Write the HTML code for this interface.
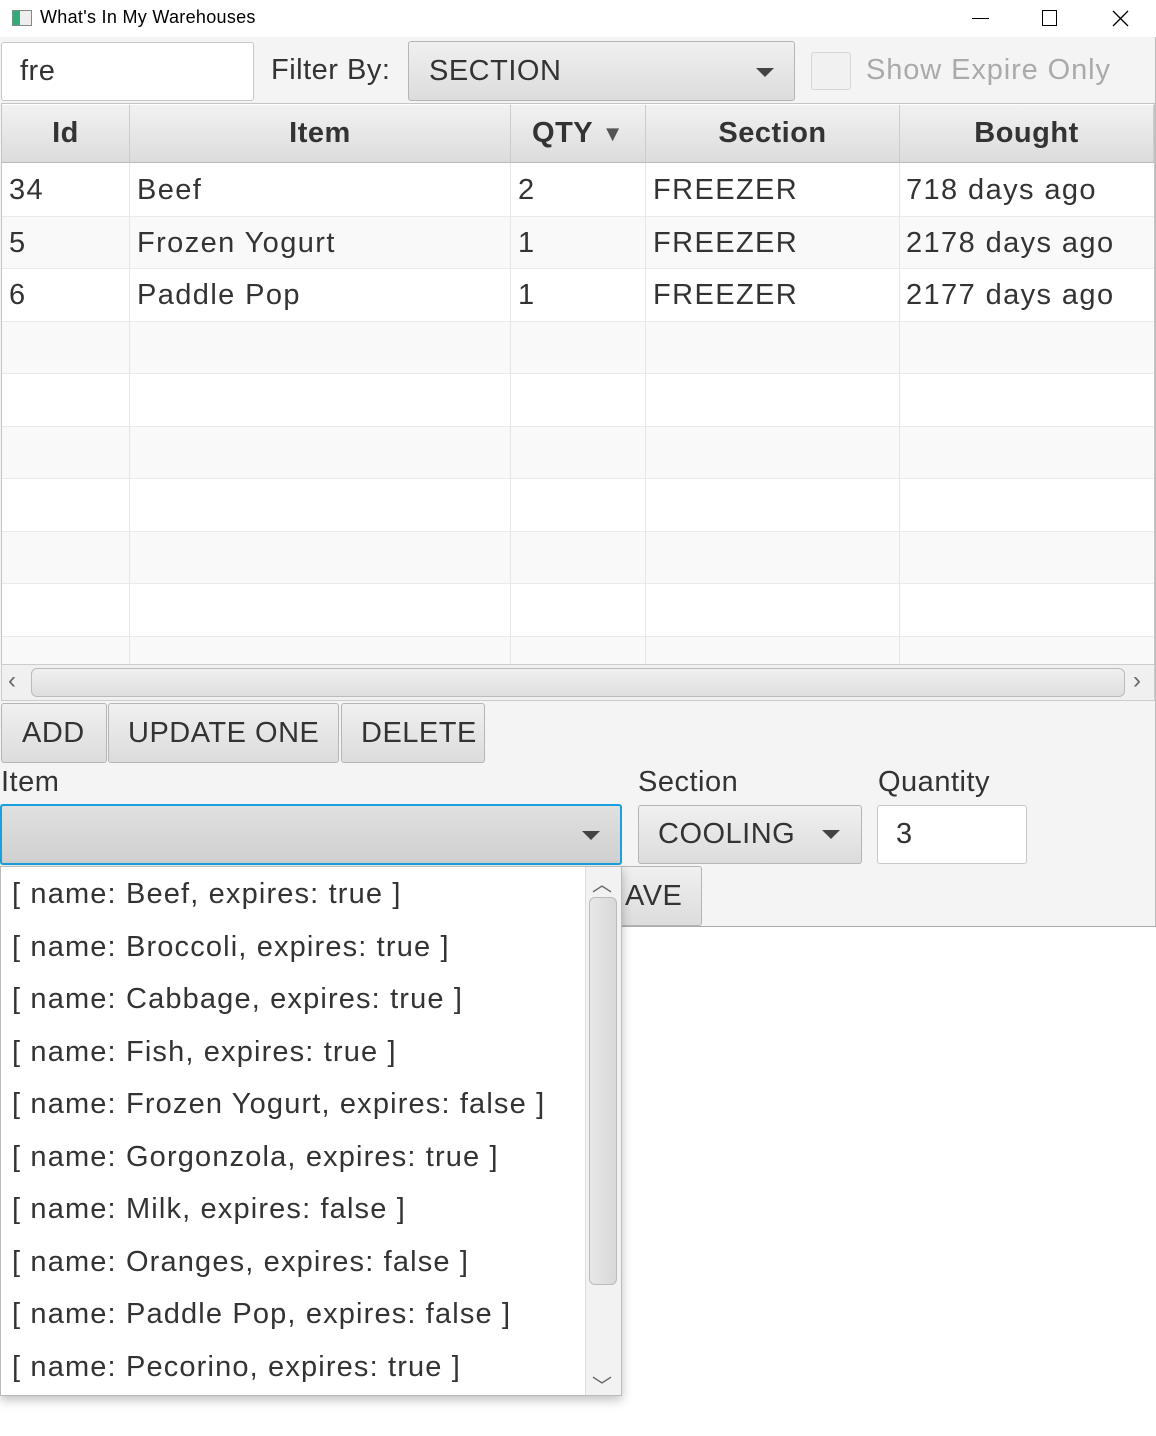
<!DOCTYPE html>
<html><head><meta charset="utf-8"><style>
*{box-sizing:border-box;margin:0;padding:0}
body{width:1156px;height:1436px;background:#fff;font-family:"Liberation Sans",sans-serif;color:#333;position:relative;overflow:hidden;font-size:29px;letter-spacing:0.5px}
.a{position:absolute}
.win{left:0;top:37px;width:1156px;height:890px;background:#f4f4f4;border-right:1px solid #bbb;border-bottom:1px solid #aaa}
.btn{position:absolute;background:linear-gradient(#f0f0f0,#dcdcdc);border:1px solid #b5b5b5;border-radius:3px;color:#333;display:flex;align-items:center}
.tri{width:0;height:0;border-left:9px solid transparent;border-right:9px solid transparent;border-top:9px solid #444;position:absolute}
.hd{position:absolute;top:105px;height:58px;background:linear-gradient(#f2f2f2,#dcdcdc);border-right:1px solid #ccc;border-bottom:1px solid #bbb;font-weight:bold;display:flex;align-items:center;justify-content:center}
.row{position:absolute;left:2px;width:1152px;height:52.5px;border-bottom:1px solid #eaeaea;letter-spacing:1.4px}
.vl{position:absolute;top:163px;height:501px;width:1px;background:#e6e6e6}
.c{position:absolute;top:10px}
.it{position:absolute;left:12px;height:52.5px;line-height:52px;white-space:nowrap;color:#333;letter-spacing:1.15px}
</style></head><body>
<div class="a" style="left:12px;top:10px;width:20px;height:16px;border:1px solid #888;background:linear-gradient(90deg,#3a7 0 40%,#eee 40%)"></div>
<div class="a" style="left:40px;top:7px;font-size:18px;color:#000;letter-spacing:0.3px">What's In My Warehouses</div>
<div class="a" style="left:972px;top:18px;width:17px;height:1px;background:#000"></div>
<div class="a" style="left:1042px;top:10px;width:15px;height:16px;border:1px solid #000"></div>
<svg class="a" style="left:1112px;top:10px" width="17" height="17"><path d="M1 1L16 16M16 1L1 16" stroke="#000" stroke-width="1.3"/></svg>
<div class="a win"></div>
<div class="a" style="left:1px;top:42px;width:253px;height:59px;background:#fff;border:1px solid #c8c8c8;border-radius:3px;padding:12px 18px">fre</div>
<div class="a" style="left:271px;top:54px">Filter By:</div>
<div class="btn" style="left:408px;top:41px;width:387px;height:60px;padding-left:20px">SECTION<div class="tri" style="left:347px;top:26px"></div></div>
<div class="a" style="left:811px;top:52px;width:40px;height:38px;border:1px solid #d6d6d6;border-radius:3px;background:#f1f1f1"></div>
<div class="a" style="left:866px;top:54px;color:#aaa;letter-spacing:0.9px">Show Expire Only</div>
<div class="a" style="left:1px;top:103px;width:1154px;height:562px;background:#fff;border:1px solid #c4c4c4"></div>
<div class="hd" style="left:2px;width:128px">Id</div>
<div class="hd" style="left:130px;width:381px">Item</div>
<div class="hd" style="left:511px;width:135px">QTY&nbsp;<span style="font-size:22px;color:#555">▼</span></div>
<div class="hd" style="left:646px;width:254px">Section</div>
<div class="hd" style="left:900px;width:254px">Bought</div>
<div class="row" style="top:164px;background:#fff"><span class="c" style="left:7px">34</span><span class="c" style="left:135px">Beef</span><span class="c" style="left:516px">2</span><span class="c" style="left:651px">FREEZER</span><span class="c" style="left:904px">718 days ago</span></div>
<div class="row" style="top:216.5px;background:#f9f9f9"><span class="c" style="left:7px">5</span><span class="c" style="left:135px">Frozen Yogurt</span><span class="c" style="left:516px">1</span><span class="c" style="left:651px">FREEZER</span><span class="c" style="left:904px">2178 days ago</span></div>
<div class="row" style="top:269px;background:#fff"><span class="c" style="left:7px">6</span><span class="c" style="left:135px">Paddle Pop</span><span class="c" style="left:516px">1</span><span class="c" style="left:651px">FREEZER</span><span class="c" style="left:904px">2177 days ago</span></div>
<div class="row" style="top:321.5px;background:#f9f9f9"></div>
<div class="row" style="top:374px;background:#fff"></div>
<div class="row" style="top:426.5px;background:#f9f9f9"></div>
<div class="row" style="top:479px;background:#fff"></div>
<div class="row" style="top:531.5px;background:#f9f9f9"></div>
<div class="row" style="top:584px;background:#fff"></div>
<div class="row" style="top:636.5px;background:#f9f9f9;height:27px;border:0"></div>
<div class="vl" style="left:129px"></div><div class="vl" style="left:510px"></div><div class="vl" style="left:645px"></div><div class="vl" style="left:899px"></div>
<div class="a" style="left:1px;top:664px;width:1154px;height:37px;background:#f0f0f0;border:1px solid #ccc"></div>
<div class="a" style="left:8px;top:667px;font-size:24px;color:#666">‹</div>
<div class="a" style="left:1133px;top:667px;font-size:24px;color:#666">›</div>
<div class="a" style="left:31px;top:668px;width:1094px;height:29px;border:1px solid #bbb;border-radius:6px;background:linear-gradient(#f0f0f0,#dedede)"></div>
<div class="btn" style="left:1px;top:703px;width:106px;height:60px;padding-left:20px">ADD</div>
<div class="btn" style="left:108px;top:703px;width:231px;height:60px;padding-left:19px">UPDATE ONE</div>
<div class="btn" style="left:341px;top:703px;width:144px;height:60px;padding-left:19px">DELETE</div>
<div class="a" style="left:1px;top:766px">Item</div>
<div class="a" style="left:638px;top:766px">Section</div>
<div class="a" style="left:878px;top:766px">Quantity</div>
<div class="btn" style="left:0;top:804px;width:622px;height:61px;border:2px solid #1aa0de;background:linear-gradient(#e0e0e0,#d0d0d0)"><div class="tri" style="left:580px;top:25px"></div></div>
<div class="btn" style="left:638px;top:805px;width:224px;height:59px;padding-left:19px">COOLING<div class="tri" style="left:183px;top:24px"></div></div>
<div class="a" style="left:877px;top:805px;width:150px;height:59px;background:#fff;border:1px solid #c8c8c8;border-radius:3px;padding:12px 18px">3</div>
<div class="btn" style="left:600px;top:866px;width:102px;height:60px;padding-left:24px">AVE</div>
<div class="a" style="left:0;top:866px;width:622px;height:530px;background:#fff;border:1px solid #bbb;box-shadow:0 4px 10px rgba(0,0,0,.25)"></div>
<div class="a" style="left:585px;top:867px;width:36px;height:528px;background:#f2f2f2;border-left:1px solid #ddd"></div>
<div class="a" style="left:589px;top:897px;width:28px;height:388px;border:1px solid #bbb;border-radius:6px;background:linear-gradient(90deg,#e8e8e8,#d8d8d8)"></div>
<div class="a" style="left:592px;top:868px;font-size:20px;color:#666">︿</div>
<div class="a" style="left:592px;top:1370px;font-size:20px;color:#666">﹀</div>
<div class="it" style="top:868px">[ name: Beef, expires: true ]</div>
<div class="it" style="top:920.5px">[ name: Broccoli, expires: true ]</div>
<div class="it" style="top:973px">[ name: Cabbage, expires: true ]</div>
<div class="it" style="top:1025.5px">[ name: Fish, expires: true ]</div>
<div class="it" style="top:1078px">[ name: Frozen Yogurt, expires: false ]</div>
<div class="it" style="top:1130.5px">[ name: Gorgonzola, expires: true ]</div>
<div class="it" style="top:1183px">[ name: Milk, expires: false ]</div>
<div class="it" style="top:1235.5px">[ name: Oranges, expires: false ]</div>
<div class="it" style="top:1288px">[ name: Paddle Pop, expires: false ]</div>
<div class="it" style="top:1340.5px">[ name: Pecorino, expires: true ]</div>
</body></html>
